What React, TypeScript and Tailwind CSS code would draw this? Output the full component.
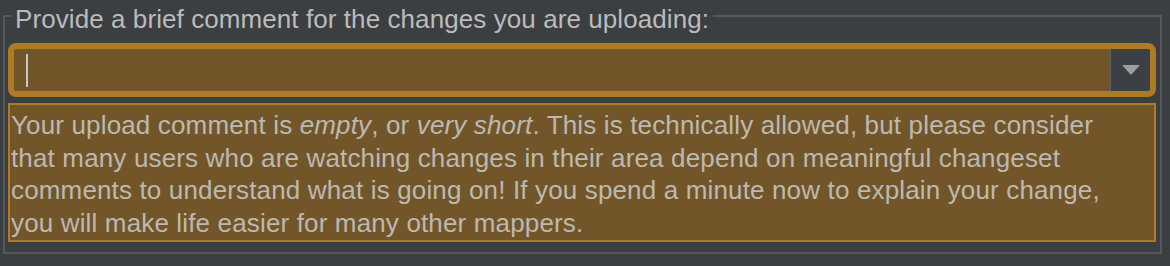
import React from "react";

export default function App() {
  const font = { fontFamily: '"Liberation Sans", Arial, Helvetica, sans-serif' };
  return (
    <div className="w-full h-[266px] bg-[#3b3f42] overflow-hidden" style={font}>
      <fieldset className="ml-[3px] mr-[8px] border-2 border-[#56595c] pb-[10px]">
        <legend className="ml-[6px] px-[4px] pt-[6px] text-[26px] leading-[26px] tracking-[0.08px] text-[#bbbbbb] whitespace-nowrap">
          Provide a brief comment for the changes you are uploading:
        </legend>
        <div className="mt-[11px] ml-[3px] mr-[4px] h-[54px] rounded-[8px] border-[6px] border-[#ae7a22] bg-[#72562a] flex overflow-hidden">
          <div className="flex-1 flex items-center pl-[12px]">
            <div className="w-[2px] h-[33px] bg-[#c8c8c8]" />
          </div>
          <div className="w-[41px] h-full bg-[#3c4044] border-l-2 border-[#5a5e62] flex items-center justify-center">
            <svg width="18" height="10" viewBox="0 0 18 10">
              <polygon points="0,0 18,0 9,10" fill="#9b9ea1" />
            </svg>
          </div>
        </div>
        <div className="mt-[6px] ml-[3px] mr-[4px] border-2 border-[#b07b21] bg-[#72562a] pt-[4px] pb-[1px] pl-[1px] text-[26px] leading-[32.5px] tracking-[0.15px] text-[#bcb9b1] whitespace-nowrap">
          Your upload comment is <i>empty</i>, or <i>very short</i>. This is technically allowed, but please consider
          <br />
          that many users who are watching changes in their area depend on meaningful changeset
          <br />
          comments to understand what is going on! If you spend a minute now to explain your change,
          <br />
          you will make life easier for many other mappers.
        </div>
      </fieldset>
    </div>
  );
}
